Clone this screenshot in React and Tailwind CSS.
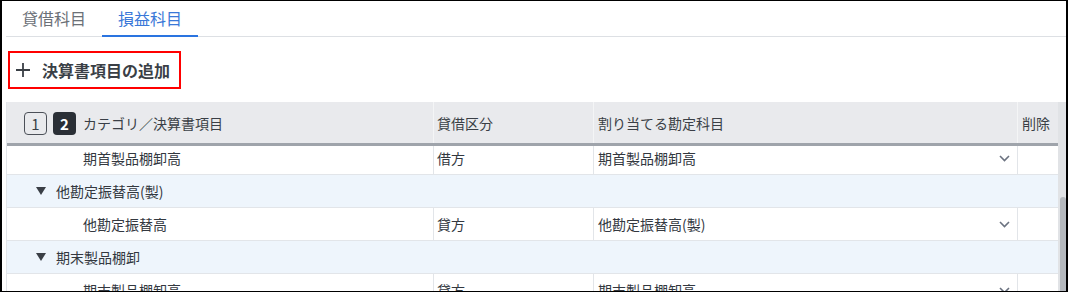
import { useEffect, useRef } from "react";

const rows = [
  { type: "group", label: "売上高" },
  { type: "item", label: "製品売上高", side: "貸方", account: "売上高" },
  { type: "group", label: "売上値引" },
  { type: "item", label: "売上値引高", side: "借方", account: "売上値引高" },
  { type: "group", label: "期首製品棚卸" },
  { type: "item", label: "期首製品棚卸高", side: "借方", account: "期首製品棚卸高" },
  { type: "group", label: "他勘定振替高(製)" },
  { type: "item", label: "他勘定振替高", side: "貸方", account: "他勘定振替高(製)" },
  { type: "group", label: "期末製品棚卸" },
  { type: "item", label: "期末製品棚卸高", side: "貸方", account: "期末製品棚卸高" },
  { type: "group", label: "当期製品製造原価" },
  { type: "item", label: "当期製品製造原価", side: "借方", account: "当期製品製造原価" },
  { type: "group", label: "販売費及び一般管理費" },
  { type: "item", label: "給料手当", side: "借方", account: "給料手当" },
  { type: "item", label: "旅費交通費", side: "借方", account: "旅費交通費" },
];

function Chevron() {
  return (
    <svg width="11" height="7" viewBox="0 0 11 7" fill="none">
      <path d="M1 1l4.5 4.5L10 1" stroke="#6b7280" strokeWidth="1.6" />
    </svg>
  );
}

function GroupRow({ label }) {
  return (
    <div className="flex h-[33px] items-center border-b border-[#e2e5e9] bg-[#eef5fc] pl-[29px]">
      <svg width="10" height="8" viewBox="0 0 10 8" className="mr-[10px]">
        <polygon points="0,0 10,0 5,8" fill="#3a3f46" />
      </svg>
      <span>{label}</span>
    </div>
  );
}

function ItemRow({ row }) {
  return (
    <div className="flex h-[33px] border-b border-[#e2e5e9] bg-white">
      <div className="flex w-[427px] shrink-0 items-center border-r border-[#e2e5e9] pl-[76px]">
        {row.label}
      </div>
      <div className="flex w-[160px] shrink-0 items-center border-r border-[#e2e5e9] pl-[3px]">
        {row.side}
      </div>
      <div className="flex w-[424px] shrink-0 items-center justify-between border-r border-[#e2e5e9] pl-[4px] pr-[7px]">
        <span>{row.account}</span>
        <Chevron />
      </div>
      <div className="w-[40px] shrink-0" />
    </div>
  );
}

export default function App() {
  const scrollRef = useRef(null);

  useEffect(() => {
    if (scrollRef.current) scrollRef.current.scrollTop = 169;
  }, []);

  return (
    <div className="h-[292px] overflow-hidden border-t border-b border-l-2 border-r-2 border-black bg-white pl-1 font-['Noto_Sans_CJK_JP',sans-serif] text-[#33383f]">
      {/* Tabs */}
      <div className="flex border-b border-[#dde0e4]">
        <button className="-mb-px h-9 border-b-2 border-transparent px-4 text-[16px] text-[#6b7077]">
          貸借科目
        </button>
        <button className="-mb-px h-9 border-b-2 border-[#2a74e0] px-4 text-[16px] text-[#3a78d8]">
          損益科目
        </button>
      </div>

      {/* Add button */}
      <div className="mt-[14px] mb-[13px]">
        <button className="ml-[2px] flex h-[38px] w-[173px] items-center border-2 border-[#ff0000] pl-[6px] text-[16px] font-bold text-[#3a3f46]">
          <svg width="14" height="14" viewBox="0 0 14 14" className="mr-[12px]">
            <path d="M7 0v14M0 7h14" stroke="#3a3f46" strokeWidth="1.8" />
          </svg>
          決算書項目の追加
        </button>
      </div>

      {/* Table + scrollbar */}
      <div className="flex h-[306px]">
        <div
          ref={scrollRef}
          className="h-full w-[1052px] shrink-0 overflow-hidden border-l border-[#e2e5e9] text-[14px]"
        >
          <div className="sticky top-0 z-10 flex h-[44px] border-b-[3px] border-[#9fa4ab] bg-[#e9eaed] text-[#3a3f46]">
            <div className="flex w-[427px] shrink-0 items-center border-r border-[#f4f5f6] pt-[2px] pl-[17px]">
              <span className="mr-[6px] flex h-[23px] w-[23px] items-center justify-center rounded-[4px] border border-[#4b5058] text-[15px] leading-none text-[#3a3f46]">
                1
              </span>
              <span className="mr-[7px] flex h-[23px] w-[23px] items-center justify-center rounded-[4px] bg-[#2a2f36] text-[15px] font-bold leading-none text-white">
                2
              </span>
              <span>カテゴリ／決算書項目</span>
            </div>
            <div className="flex w-[160px] shrink-0 items-center border-r border-[#f4f5f6] pt-[2px] pl-[3px]">
              貸借区分
            </div>
            <div className="flex w-[424px] shrink-0 items-center border-r border-[#f4f5f6] pt-[2px] pl-[4px]">
              割り当てる勘定科目
            </div>
            <div className="flex w-[40px] shrink-0 items-center pt-[2px] pl-[4px]">削除</div>
          </div>
          {rows.map((row, i) =>
            row.type === "group" ? (
              <GroupRow key={i} label={row.label} />
            ) : (
              <ItemRow key={i} row={row} />
            )
          )}
        </div>
        {/* scrollbar */}
        <div className="w-2 shrink-0 bg-[#e1e3e6] pt-[95px]">
          <div className="ml-[2px] h-[160px] w-[6px] rounded-t-[3px] bg-[#b4b8bd]" />
        </div>
      </div>
    </div>
  );
}
